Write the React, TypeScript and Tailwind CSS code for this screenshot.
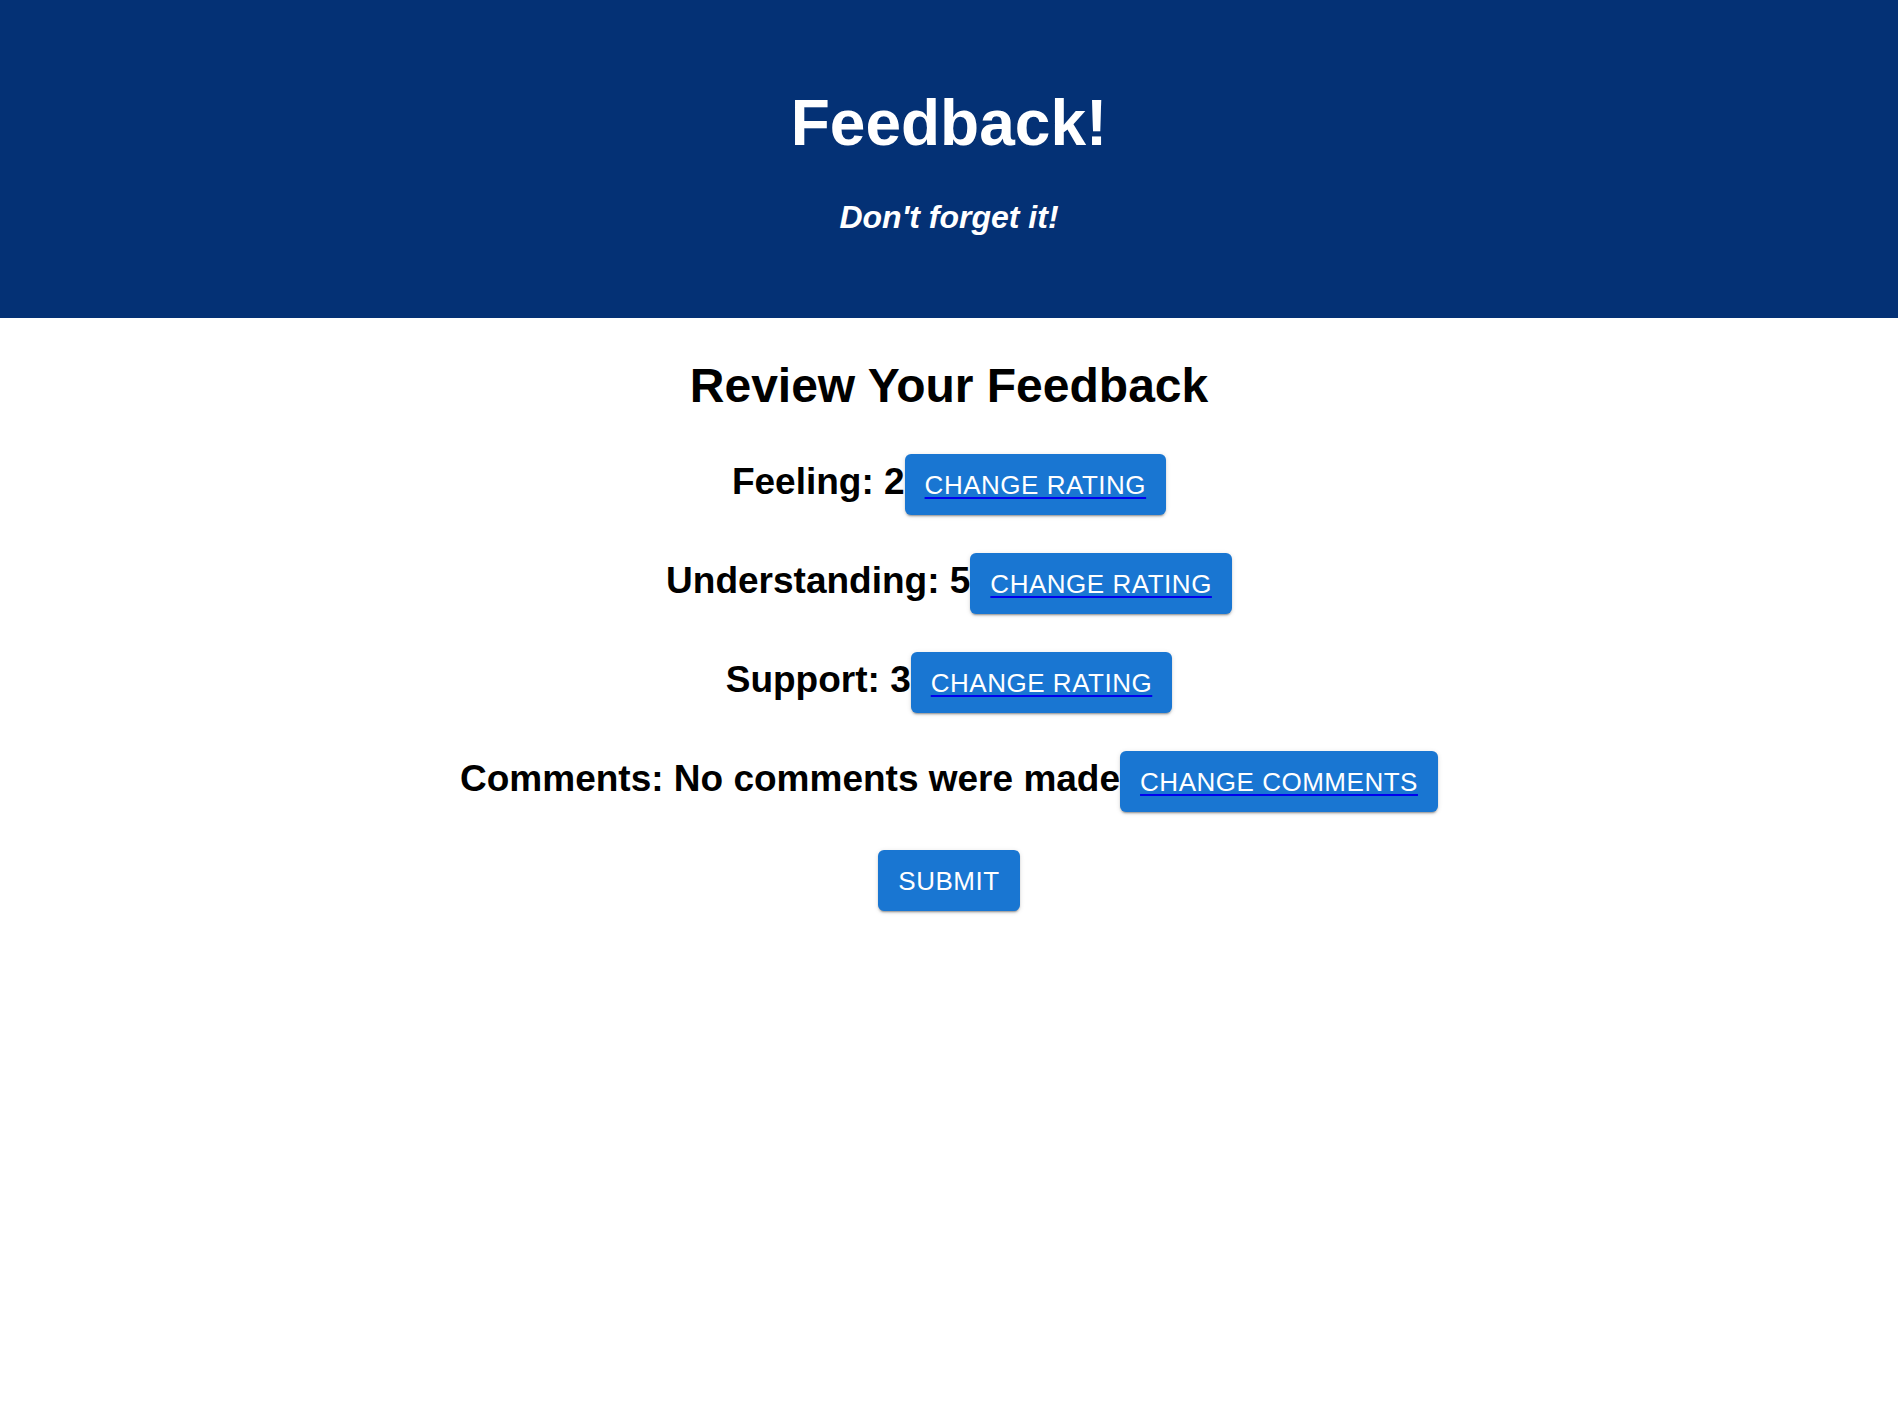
import React from "react";

interface ReviewRow {
  label: string;
  value: string | number;
  action: string;
}

const rows: ReviewRow[] = [
  { label: "Feeling", value: 2, action: "Change Rating" },
  { label: "Understanding", value: 5, action: "Change Rating" },
  { label: "Support", value: 3, action: "Change Rating" },
  { label: "Comments", value: "No comments were made", action: "Change Comments" },
];

const buttonClass =
  "h-[61px] px-[20px] rounded-[6px] bg-[#1976d2] text-white text-[26px] leading-none uppercase tracking-[0.02em] shadow-[0px_3px_1px_-2px_rgba(0,0,0,0.2),0px_2px_2px_0px_rgba(0,0,0,0.14),0px_1px_5px_0px_rgba(0,0,0,0.12)]";

const App: React.FC = () => {
  return (
    <div className="min-h-screen bg-white font-['Liberation_Sans',Arial,sans-serif] text-black">
      <header className="bg-[#043175] pt-[91px] pb-[85px] flex flex-col items-center text-white">
        <h1 className="text-[64px] leading-none font-bold">Feedback!</h1>
        <h4 className="mt-[46px] text-[32px] leading-none font-bold italic">
          Don't forget it!
        </h4>
      </header>

      <main className="flex flex-col items-center">
        <h2 className="mt-[44px] text-[48px] leading-none font-bold">
          Review Your Feedback
        </h2>

        <div className="mt-[44px] flex flex-col items-center gap-[38px]">
          {rows.map((row) => (
            <div key={row.label} className="flex items-baseline">
              <h3 className="text-[37px] leading-none font-bold">
                {row.label}: {row.value}
              </h3>
              <a href="#" className="text-[#0000ee] underline">
                <button className={buttonClass}>
                  <span className="underline decoration-[#0000ee] decoration-2 underline-offset-[3px]">
                    {row.action}
                  </span>
                </button>
              </a>
            </div>
          ))}

          <button className={buttonClass}>Submit</button>
        </div>
      </main>
    </div>
  );
};

export default App;
